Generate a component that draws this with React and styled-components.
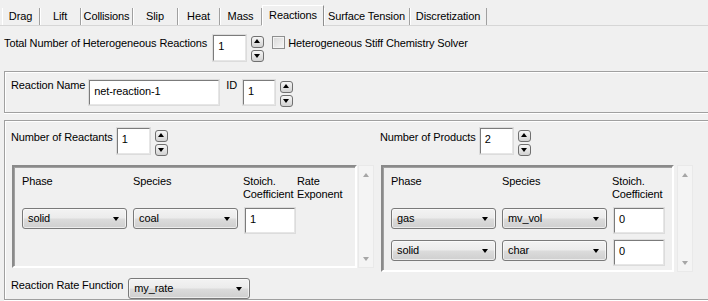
import React from 'react';
import styled, { createGlobalStyle, css } from 'styled-components';

const GlobalStyle = createGlobalStyle`
  html, body {
    margin: 0;
    padding: 0;
    background: #f0f0f0;
    overflow: hidden;
  }
  body {
    font-family: "Liberation Sans", Arial, sans-serif;
    font-size: 11px;
    letter-spacing: -0.12px;
    color: #000;
  }
`;

const Page = styled.div`
  width: 708px;
  height: 301px;
  overflow: hidden;
`;

const TabBar = styled.div`
  display: flex;
  align-items: flex-end;
  height: 25px;
  padding-left: 2px;
  border-bottom: 1px solid #d6d6d6;
`;

const Tab = styled.div`
  box-sizing: border-box;
  width: ${p => p.$w}px;
  height: 17px;
  line-height: 17px;
  text-align: center;
  border-right: 1px solid #a0a0a0;
  box-shadow: inset 1px 0 0 #ffffff;
  white-space: nowrap;

  ${p => p.$active && css`
    height: 21px;
    line-height: 19px;
    margin-bottom: -1px;
    background: #f0f0f0;
    border-top: 1px solid #ffffff;
    border-left: 1px solid #ffffff;
    border-right: 1px solid #8e8e8e;
    box-shadow: none;
  `}
`;

const Row = styled.div`
  display: flex;
  align-items: flex-start;
  margin-top: ${p => p.$mt ?? 0}px;
`;

const TopRow = styled(Row)`
  margin-top: 9px;
  padding-left: 4px;
`;

const Label = styled.span`
  line-height: 13px;
  margin-top: ${p => p.$mt ?? 2}px;
  margin-left: ${p => p.$ml ?? 0}px;
  white-space: nowrap;
`;

const TextBox = styled.div`
  box-sizing: border-box;
  width: ${p => p.$w}px;
  height: ${p => p.$h ?? 26}px;
  margin-left: ${p => p.$ml ?? 0}px;
  margin-top: ${p => p.$mt ?? 0}px;
  padding: 4px 0 0 4px;
  background: #fff;
  border: 1px solid;
  border-color: #7b7b7b #e6e6e6 #e6e6e6 #7b7b7b;
  box-shadow: 0 0 0 1px #dcdcdc;
  line-height: 13px;
  white-space: nowrap;
`;

const Spinner = styled.div`
  display: flex;
  flex-direction: column;
  gap: 2px;
  margin-left: 5px;
  margin-top: ${p => p.$mt ?? 1}px;
`;

const SpinButton = styled.div`
  position: relative;
  box-sizing: border-box;
  width: 13px;
  height: 12px;
  border: 1px solid #707070;
  border-radius: 3px;
  background: linear-gradient(#f6f6f6, #e4e4e4 50%, #d2d2d2);

  &::after {
    content: '';
    position: absolute;
    left: 2px;
    ${p => p.$down ? css`
      top: 3px;
      border-top: 4px solid #000;
    ` : css`
      top: 2px;
      border-bottom: 4px solid #000;
    `}
    border-left: 3.5px solid transparent;
    border-right: 3.5px solid transparent;
  }
`;

const Checkbox = styled.div`
  box-sizing: border-box;
  width: 13px;
  height: 13px;
  margin: 1px 0 0 8px;
  border: 1px solid #8e8f8f;
  background: linear-gradient(135deg, #d8d8d8, #f7f7f7);
  box-shadow: inset 0 0 0 1px #f4f4f4;
`;

const GroupPanel = styled.div`
  box-sizing: border-box;
  margin-left: 4px;
  height: ${p => p.$h}px;
  margin-top: ${p => p.$mt}px;
  border: 1px solid #a0a0a0;
  border-right: none;
  box-shadow: inset 1px 1px 0 #ffffff, 0 1px 0 #ffffff;
  padding: 7px 0 0 6px;
`;

const Columns = styled.div`
  display: grid;
  grid-template-columns: 369px 1fr;
`;

const TableArea = styled.div`
  display: flex;
  margin-top: 9px;
  margin-left: 1px;
`;

const TableBox = styled.div`
  box-sizing: border-box;
  width: ${p => p.$w}px;
  height: ${p => p.$h}px;
  border: 2px solid;
  border-color: #8a8a8a #ffffff #ffffff #8a8a8a;
  box-shadow: inset 1px 1px 0 #a0a0a0;
  padding: 8px 0 0 8px;
`;

const TableHeader = styled.div`
  display: flex;
  line-height: 13px;
  height: 26px;
  margin-bottom: 7px;
`;

const HeadCell = styled.div`
  width: ${p => p.$w ? `${p.$w}px` : 'auto'};
  margin-left: ${p => p.$ml ?? 0}px;
  white-space: nowrap;
`;

const TableRow = styled.div`
  display: flex;
  align-items: flex-start;
  height: 25px;
  margin-bottom: 7px;
`;

const Combo = styled.div`
  position: relative;
  box-sizing: border-box;
  width: ${p => p.$w ?? 105}px;
  height: 21px;
  margin-right: ${p => p.$mr ?? 0}px;
  margin-left: ${p => p.$ml ?? 0}px;
  padding-left: 5px;
  line-height: 18px;
  border: 1px solid #7a7a7a;
  border-radius: 3px;
  background: linear-gradient(#f3f3f3, #ebebeb 49%, #dcdcdc 51%, #cfcfcf);
  box-shadow: inset 0 0 0 1px rgba(255, 255, 255, 0.6);

  &::after {
    content: '';
    position: absolute;
    right: 7px;
    top: 8px;
    border-top: 4px solid #000;
    border-left: 3.5px solid transparent;
    border-right: 3.5px solid transparent;
  }
`;

const ScrollCol = styled.div`
  position: relative;
  box-sizing: border-box;
  width: 16px;
  height: ${p => p.$h}px;
  margin-left: ${p => p.$ml}px;
  background: #f4f4f4;
  border: 1px solid #e9e9e9;

  &::before, &::after {
    content: '';
    position: absolute;
    left: 4px;
    border-left: 3.5px solid transparent;
    border-right: 3.5px solid transparent;
  }
  &::before {
    top: 7px;
    border-bottom: 4px solid #a6a6a6;
  }
  &::after {
    bottom: 6px;
    border-top: 4px solid #a6a6a6;
  }
`;

const tabs = [
  ['Drag', 38], ['Lift', 41], ['Collisions', 52], ['Slip', 45], ['Heat', 42],
  ['Mass', 42], ['Reactions', 62], ['Surface Tension', 86], ['Discretization', 77],
];

function Spin({ mt = 1 }) {
  return (
    <Spinner $mt={mt}>
      <SpinButton />
      <SpinButton $down />
    </Spinner>
  );
}

function SpeciesTable({ w, h, scrollGap, rows, rateCol }) {
  return (
    <TableArea>
      <TableBox $w={w} $h={h}>
        <TableHeader>
          <HeadCell $w={111}>Phase</HeadCell>
          <HeadCell $w={110}>Species</HeadCell>
          <HeadCell $w={52}>Stoich.<br />Coefficient</HeadCell>
          {rateCol && <HeadCell $ml={2}>Rate<br />Exponent</HeadCell>}
        </TableHeader>
        {rows.map(([phase, species, coef], i) => (
          <TableRow key={i}>
            <Combo $mr={6}>{phase}</Combo>
            <Combo $mr={6}>{species}</Combo>
            <TextBox $w={50} $h={25} $ml={1}>{coef}</TextBox>
          </TableRow>
        ))}
      </TableBox>
      <ScrollCol $h={h} $ml={scrollGap} />
    </TableArea>
  );
}

export default function App() {
  return (
    <Page>
      <GlobalStyle />
      <TabBar>
        {tabs.map(([name, w]) => (
          <Tab key={name} $w={w} $active={name === 'Reactions'}>{name}</Tab>
        ))}
      </TabBar>

      <TopRow>
        <Label>Total Number of Heterogeneous Reactions</Label>
        <TextBox $w={33} $ml={6}>1</TextBox>
        <Spin />
        <Checkbox />
        <Label $ml={3}>Heterogeneous Stiff Chemistry Solver</Label>
      </TopRow>

      <GroupPanel $mt={9} $h={42}>
        <Row>
          <Label $mt={0}>Reaction Name</Label>
          <TextBox $w={130} $h={25} $ml={4} $mt={1}>net-reaction-1</TextBox>
          <Label $mt={0} $ml={7}>ID</Label>
          <TextBox $w={32} $h={25} $ml={6} $mt={1}>1</TextBox>
          <Spin mt={2} />
        </Row>
      </GroupPanel>

      <GroupPanel $mt={7} $h={180}>
        <Columns>
          <div>
            <Row>
              <Label $mt={3}>Number of Reactants</Label>
              <TextBox $w={33} $ml={4}>1</TextBox>
              <Spin mt={2} />
            </Row>
            <SpeciesTable w={345} h={103} scrollGap={1} rateCol rows={[['solid', 'coal', '1']]} />
            <Row $mt={10}>
              <Label $mt={1}>Reaction Rate Function</Label>
              <Combo $w={122} $ml={5}>my_rate</Combo>
            </Row>
          </div>
          <div>
            <Row>
              <Label $mt={3}>Number of Products</Label>
              <TextBox $w={33} $ml={4}>2</TextBox>
              <Spin mt={2} />
            </Row>
            <SpeciesTable
              w={293}
              h={107}
              scrollGap={3}
              rows={[['gas', 'mv_vol', '0'], ['solid', 'char', '0']]}
            />
          </div>
        </Columns>
      </GroupPanel>
    </Page>
  );
}
